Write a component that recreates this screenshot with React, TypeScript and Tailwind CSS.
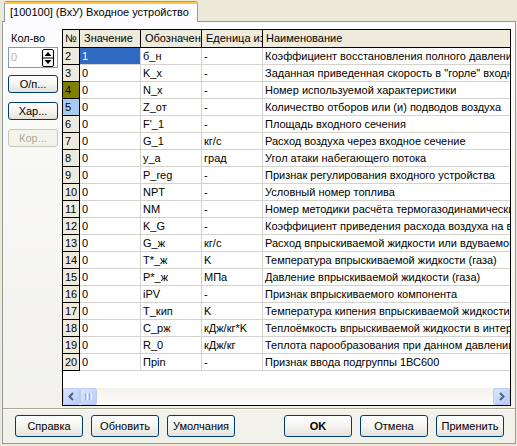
import React from "react";

const rows: string[][] = [
  ["2", "1", "б_н", "-", "Коэффициент восстановления полного давления"],
  ["3", "0", "K_x", "-", "Заданная приведенная скорость в \"горле\" входного устройства"],
  ["4", "0", "N_x", "-", "Номер используемой характеристики"],
  ["5", "0", "Z_от", "-", "Количество отборов или (и) подводов воздуха"],
  ["6", "0", "F'_1", "-", "Площадь входного сечения"],
  ["7", "0", "G_1", "кг/с", "Расход воздуха через входное сечение"],
  ["8", "0", "у_а", "град", "Угол атаки набегающего потока"],
  ["9", "0", "P_reg", "-", "Признак регулирования входного устройства"],
  ["10", "0", "NPT", "-", "Условный номер топлива"],
  ["11", "0", "NM", "-", "Номер методики расчёта термогазодинамических параметров"],
  ["12", "0", "K_G", "-", "Коэффициент приведения расхода воздуха на входе"],
  ["13", "0", "G_ж", "кг/с", "Расход впрыскиваемой жидкости или вдуваемого газа"],
  ["14", "0", "T*_ж", "K", "Температура впрыскиваемой жидкости (газа)"],
  ["15", "0", "P*_ж", "МПа", "Давление впрыскиваемой жидкости (газа)"],
  ["16", "0", "iPV", "-", "Признак впрыскиваемого компонента"],
  ["17", "0", "T_кип", "K", "Температура кипения впрыскиваемой жидкости"],
  ["18", "0", "C_рж", "кДж/кг*K", "Теплоёмкость впрыскиваемой жидкости в интервале температур"],
  ["19", "0", "R_0", "кДж/кг", "Теплота парообразования при данном давлении"],
  ["20", "0", "Пpin", "-", "Признак ввода подгруппы 1ВС600"],
];

function XpButton({ children, w, h, disabled, bold }: { children: React.ReactNode; w: string; h: string; disabled?: boolean; bold?: boolean }) {
  const base = disabled
    ? "border-[#C9C7BA] bg-[#F5F4EA] text-[#ACA899]"
    : "border-[#003C74] bg-gradient-to-b from-[#FFFFFF] via-[#F5F4F0] to-[#E3E2DA] text-black";
  return (
    <div
      className={`${w} ${h} ${base} ${bold ? "font-bold" : ""} shrink-0 rounded-[3px] border flex items-center justify-center leading-[13px]`}
    >
      {children}
    </div>
  );
}

function SpinIcon() {
  return (
    <svg width="12" height="18" viewBox="0 0 12 18">
      <rect x="0.5" y="0.5" width="11" height="17" rx="1.5" fill="#F2F2EE" stroke="#000" />
      <line x1="1" y1="9" x2="11" y2="9" stroke="#000" />
      <rect x="1.5" y="1.5" width="9" height="6.5" fill="#FFFFFF" />
      <rect x="1.5" y="10" width="9" height="6.5" fill="#FFFFFF" />
      <polygon points="2.5,7 6,3 9.5,7" fill="#000" />
      <polygon points="2.5,11 6,15 9.5,11" fill="#000" />
    </svg>
  );
}

function Chevron({ dir }: { dir: "l" | "r" }) {
  return (
    <svg width="9" height="9" viewBox="0 0 9 9">
      <path
        d={dir === "l" ? "M6 1 L2.5 4.5 L6 8" : "M3 1 L6.5 4.5 L3 8"}
        fill="none"
        stroke="#4D6185"
        strokeWidth="2"
      />
    </svg>
  );
}

function ScrollBtn({ children }: { children?: React.ReactNode }) {
  return (
    <div className="w-[17px] h-[17px] shrink-0 rounded-[2px] border border-[#B9CAF3] bg-gradient-to-br from-[#DCE6FE] to-[#B6CAF6] flex items-center justify-center">
      {children}
    </div>
  );
}

export default function App() {
  return (
    <div className="w-[517px] h-[446px] bg-[#ECE9D8] font-['Liberation_Sans',Arial,sans-serif] text-[11px] text-black flex flex-col overflow-hidden">
      {/* tab strip */}
      <div className="h-[21px] shrink-0 flex items-start pl-[4px]">
        <div className="relative z-10 mt-[1px] h-[21px] w-[194px] rounded-t-[3px] border-x border-[#919B9C] bg-[#FCFCFE] overflow-hidden">
          <div className="h-[3px] bg-[#FFC83C] border-t border-[#E68B2C]" />
          <div className="pl-[5px] pt-[2px] leading-[13px] whitespace-nowrap">[100100] (ВхУ) Входное устройство</div>
        </div>
      </div>

      {/* page */}
      <div className="ml-[2px] w-[514px] h-[423px] shrink-0 border border-[#919B9C] bg-gradient-to-b from-[#FCFCFE] to-[#F1F0E9] flex flex-col">
        <div className="h-[386px] shrink-0 flex">
          {/* left panel */}
          <div className="w-[59px] shrink-0 flex flex-col pl-[5px]">
            <div className="mt-[10px] pl-[3px] leading-[13px]">Кол-во</div>
            <div className="mt-[2px] w-[50px] h-[21px] border border-[#7F9DB9] bg-white flex items-center justify-between pl-[2px] pr-[3px]">
              <span className="text-[#B5B2A5] leading-[13px]">0</span>
              <SpinIcon />
            </div>
            <div className="mt-[7px]">
              <XpButton w="w-[50px]" h="h-[18px]">О/п...</XpButton>
            </div>
            <div className="mt-[9px]">
              <XpButton w="w-[50px]" h="h-[18px]">Хар...</XpButton>
            </div>
            <div className="mt-[9px]">
              <XpButton w="w-[50px]" h="h-[18px]" disabled>Кор...</XpButton>
            </div>
          </div>

          {/* grid */}
          <div className="pt-[7px]">
            <div className="w-[449px] h-[377px] border border-black bg-white flex flex-col overflow-hidden">
              <div className="flex h-[18px] shrink-0 bg-[#EEEBDD]">
                <div className="w-[17px] shrink-0 border-r border-b border-black pl-[2px] leading-[17px] overflow-hidden whitespace-nowrap">№</div>
                <div className="w-[61px] shrink-0 border-r border-b border-black pl-[4px] leading-[17px] overflow-hidden whitespace-nowrap">Значение</div>
                <div className="w-[61px] shrink-0 border-r border-b border-black pl-[4px] leading-[17px] overflow-hidden whitespace-nowrap">Обозначение</div>
                <div className="w-[61px] shrink-0 border-r border-b border-black pl-[4px] leading-[17px] overflow-hidden whitespace-nowrap">Еденица измерения</div>
                <div className="w-[300px] shrink-0 border-r border-b border-black pl-[3px] leading-[17px] overflow-hidden whitespace-nowrap">Наименование</div>
              </div>
              {rows.map((r) => {
                const hdrBg =
                  r[0] === "4" ? "bg-[#808000]" : r[0] === "5" ? "bg-[#A6CAF0]" : "bg-[#EEEBDD]";
                const sel = r[0] === "2";
                return (
                  <div key={r[0]} className="flex h-[17px] shrink-0">
                    <div className={`w-[17px] shrink-0 border-r border-b border-black ${hdrBg} pl-[2px] leading-[16px] overflow-hidden whitespace-nowrap`}>{r[0]}</div>
                    <div className={`w-[61px] shrink-0 border-r border-b border-[#D4D2CC] pl-[2px] leading-[16px] overflow-hidden whitespace-nowrap ${sel ? "bg-[#316AC5] text-white" : ""}`}>{r[1]}</div>
                    <div className="w-[61px] shrink-0 border-r border-b border-[#D4D2CC] pl-[2px] leading-[16px] overflow-hidden whitespace-nowrap">{r[2]}</div>
                    <div className="w-[61px] shrink-0 border-r border-b border-[#D4D2CC] pl-[2px] leading-[16px] overflow-hidden whitespace-nowrap">{r[3]}</div>
                    <div className="w-[300px] shrink-0 border-r border-b border-[#D4D2CC] pl-[2px] leading-[16px] overflow-hidden whitespace-nowrap">{r[4]}</div>
                  </div>
                );
              })}
              <div className="flex-1" />
              <div className="h-[17px] shrink-0 flex bg-gradient-to-b from-[#F3F1EC] to-[#FEFEFB]">
                <ScrollBtn>
                  <Chevron dir="l" />
                </ScrollBtn>
                <ScrollBtn>
                  <div className="flex gap-[1px]">
                    <div className="w-[1px] h-[7px] bg-[#8CB0F8]" />
                    <div className="w-[1px] h-[7px] bg-[#EEF4FE]" />
                    <div className="w-[1px] h-[7px] bg-[#8CB0F8]" />
                    <div className="w-[1px] h-[7px] bg-[#EEF4FE]" />
                  </div>
                </ScrollBtn>
                <div className="flex-1" />
                <ScrollBtn>
                  <Chevron dir="r" />
                </ScrollBtn>
              </div>
            </div>
          </div>
        </div>

        {/* separator */}
        <div className="h-[2px] shrink-0 border-t border-[#ACA899] bg-white" />

        {/* bottom buttons */}
        <div className="mt-[5px] h-[22px] shrink-0 flex justify-between pl-[12px] pr-[11px]">
          <div className="flex gap-[8px]">
            <XpButton w="w-[68px]" h="h-[22px]">Справка</XpButton>
            <XpButton w="w-[68px]" h="h-[22px]">Обновить</XpButton>
            <XpButton w="w-[68px]" h="h-[22px]">Умолчания</XpButton>
          </div>
          <div className="flex gap-[8px]">
            <XpButton w="w-[68px]" h="h-[22px]" bold>OK</XpButton>
            <XpButton w="w-[68px]" h="h-[22px]">Отмена</XpButton>
            <XpButton w="w-[68px]" h="h-[22px]">Применить</XpButton>
          </div>
        </div>
      </div>
    </div>
  );
}
